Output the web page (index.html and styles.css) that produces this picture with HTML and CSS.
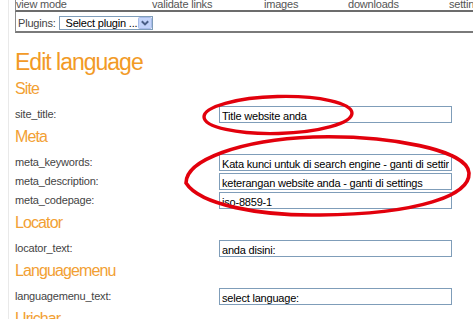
FILE: index.html
```html
<!DOCTYPE html>
<html lang="en">
<head>
<meta charset="utf-8">
<title>Edit language</title>
<link rel="stylesheet" href="styles.css">
</head>
<body>
<div class="page">
  <div class="menu">
    <span>view mode</span><span>validate links</span><span>images</span><span>downloads</span><span>settings</span>
  </div>
  <div class="plugins">
    <span class="plabel">Plugins:</span>
    <div class="select">
      <span class="seltext">Select plugin ...</span>
      <svg class="selbtn" width="14" height="12" viewBox="0 0 14 12"><rect x="0.5" y="0.5" width="13" height="11" rx="1" fill="#c3d4fa" stroke="#a7bbe8"/><path d="M3.8 4.2 L7 7.4 L10.2 4.2" fill="none" stroke="#4a5f86" stroke-width="2"/></svg>
    </div>
  </div>
  <h1 class="title">Edit language</h1>

  <h2 class="section">Site</h2>
  <div class="row"><label class="lbl">site_title:</label><input class="field" type="text" value="Title website anda"></div>

  <h2 class="section">Meta</h2>
  <div class="row"><label class="lbl">meta_keywords:</label><input class="field" type="text" value="Kata kunci untuk di search engine - ganti di settings"></div>
  <div class="row"><label class="lbl">meta_description:</label><input class="field" type="text" value="keterangan website anda - ganti di settings"></div>
  <div class="row"><label class="lbl">meta_codepage:</label><input class="field" type="text" value="iso-8859-1"></div>

  <h2 class="section">Locator</h2>
  <div class="row"><label class="lbl">locator_text:</label><input class="field" type="text" value="anda disini:"></div>

  <h2 class="section">Languagemenu</h2>
  <div class="row"><label class="lbl">languagemenu_text:</label><input class="field" type="text" value="select language:"></div>

  <h2 class="section">Urichar</h2>
</div>
<svg class="marks" width="473" height="319" viewBox="0 0 473 319">
  <ellipse cx="278" cy="115" rx="74" ry="18.5" transform="rotate(-1.5 278 115)" fill="none" stroke="#e2000c" stroke-width="3.4"/>
  <path d="M186 183 C186 160 240 140 313 137 C390 135 468 150 469 173 C470 195 420 214 320 215 C260 216 200 205 186 183 Z" fill="none" stroke="#e2000c" stroke-width="3.6"/>
</svg>
</body>
</html>
```

FILE: styles.css
```css
html, body {
  margin: 0;
  padding: 0;
  overflow: hidden;
  background: #fff;
}
body {
  font-family: "Liberation Sans", Arial, sans-serif;
  font-size: 11px;
  color: #444;
  position: relative;
  width: 473px;
  height: 319px;
}
.page {
  margin-left: 8px;
  border-left: 1px solid #e9e9e9;
  padding-left: 6px;
  min-height: 340px;
}
.menu {
  margin-top: -2px;
  height: 12px;
  line-height: 13px;
  border-left: 1px solid #8c8c8c;
  border-bottom: 2px solid #6c6c6c;
  display: grid;
  grid-template-columns: 136px 112px 84px 101px 1fr;
  white-space: nowrap;
  color: #555;
  letter-spacing: -0.2px;
}
.plugins {
  height: 17px;
  padding-top: 2px;
  padding-left: 2px;
  border-left: 1px solid #8c8c8c;
  border-bottom: 2px solid #7a7a7a;
  display: flex;
  align-items: center;
  gap: 3px;
}
.plabel {
  color: #444;
  letter-spacing: -0.2px;
}
.select {
  width: 94px;
  height: 14px;
  box-sizing: border-box;
  border: 1px solid #7f9db9;
  background: #fff;
  display: flex;
  align-items: center;
}
.seltext {
  flex: 1;
  padding-left: 6px;
  color: #000;
  letter-spacing: -0.2px;
  line-height: 12px;
  white-space: nowrap;
  overflow: hidden;
}
.selbtn {
  display: block;
  flex: none;
}
.title {
  margin: 16px 0 0;
  font-size: 23px;
  line-height: 26px;
  font-weight: normal;
  letter-spacing: -1px;
  color: #f29a26;
}
.section {
  margin: 4px 0 7px;
  font-size: 16px;
  line-height: 20px;
  font-weight: normal;
  letter-spacing: -0.9px;
  color: #f2a033;
}
.row {
  display: grid;
  grid-template-columns: 204px 233px;
  height: 17px;
}
.row + .row {
  margin-top: 2px;
}
.lbl {
  line-height: 17px;
  color: #444;
  letter-spacing: -0.2px;
  white-space: nowrap;
}
.field {
  box-sizing: border-box;
  width: 233px;
  height: 17px;
  margin: 0;
  border: 1px solid #7f9db9;
  padding: 2px 2px 0 2px;
  font-family: "Liberation Sans", Arial, sans-serif;
  font-size: 11px;
  line-height: 13px;
  letter-spacing: -0.2px;
  color: #000;
  background: #fff;
  outline: none;
}
.marks {
  position: absolute;
  top: 0;
  left: 0;
  pointer-events: none;
}
```
